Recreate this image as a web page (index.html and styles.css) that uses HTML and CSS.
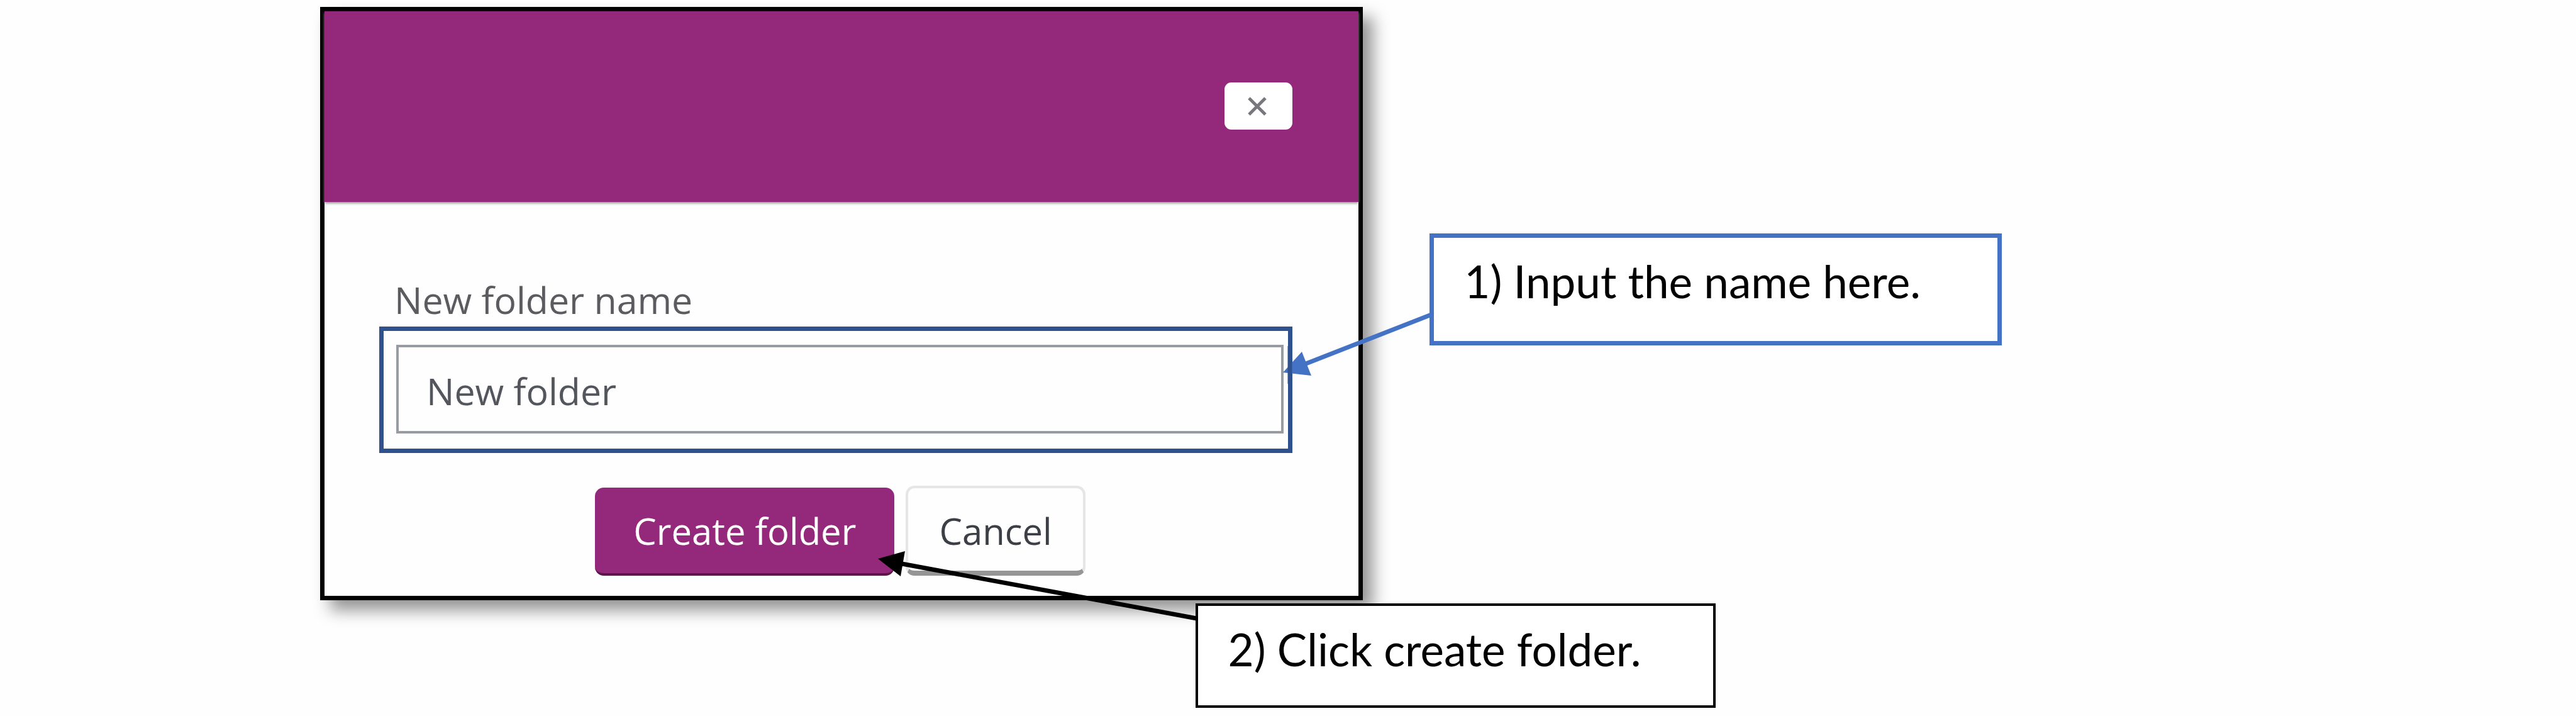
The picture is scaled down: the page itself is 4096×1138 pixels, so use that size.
FILE: index.html
```html
<!DOCTYPE html>
<html lang="en">
<head>
<meta charset="utf-8">
<title>New folder</title>
<link rel="stylesheet" href="styles.css">
</head>
<body>
<main class="guide">
  <form class="dialog">
    <header class="dialog-header">
      <button class="close" type="button" aria-label="Close">
        <svg class="close-icon" viewBox="0 0 30 30" aria-hidden="true"><path d="M2 2 L28 28 M28 2 L2 28"/></svg>
      </button>
    </header>
    <div class="dialog-body">
      <label class="field-label" for="folder-name">New folder name</label>
      <div class="highlight">
        <input class="field" id="folder-name" type="text" value="New folder">
      </div>
      <div class="actions">
        <button class="button button-primary" type="button">Create folder</button>
        <button class="button button-plain" type="button">Cancel</button>
      </div>
    </div>
  </form>
  <svg class="arrows" viewBox="0 0 4096 1138" aria-hidden="true">
    <path class="line-blue" d="M2276 500 L2074 579"/>
    <path class="head-blue" d="M2040 592 L2070 559 L2085 597 Z"/>
    <path class="frame-edge" d="M2051 550 V610"/>
    <path class="line-black" d="M1903 983 L1434 896"/>
    <path class="head-black" d="M1396 888 L1439 876 L1432 916 Z"/>
  </svg>
  <p class="callout callout-name">1) Input the name here.</p>
  <p class="callout callout-create">2) Click create folder.</p>
</main>
</body>
</html>
```
FILE: styles.css
```css
* {
  box-sizing: border-box;
}

body {
  margin: 0;
  background: #fefefe;
  font-family: "Open Sans", sans-serif;
}

.guide {
  position: relative;
  display: grid;
  grid-template-columns: 509fr 1658fr 1929fr;
  padding: 11px 0 184px;
}

.dialog {
  grid-column: 2;
  border: 7px solid #000;
  background: #fefefe;
  box-shadow: 16px 16px 24px rgba(0, 0, 0, 0.42);
}

.dialog-header {
  display: flex;
  justify-content: flex-end;
  padding: 113px 105px 115px;
  background: #94287a;
  box-shadow: 0 2px 4px #8a928c;
}

.close {
  display: flex;
  align-items: center;
  justify-content: center;
  width: 108px;
  height: 75px;
  padding: 0 4px 0 0;
  border: 0;
  border-radius: 11px;
  background: #fff;
}

.close-icon {
  width: 30px;
  height: 30px;
  fill: none;
  stroke: #77777d;
  stroke-width: 5;
}

.dialog-body {
  padding: 116px 105px 32px 87px;
}

.field-label {
  display: block;
  padding: 0 0 3px 24px;
  color: #5c5c60;
  font-size: 59px;
  line-height: 79px;
}

.highlight {
  padding: 22px 7px 24px 20px;
  border: 7px solid #2f528f;
}

.field {
  display: block;
  width: 100%;
  height: 141px;
  padding: 4px 44px 0;
  border: 4px solid #979ca3;
  background: #fefefe;
  color: #53565c;
  font: 59px "Open Sans", sans-serif;
}

.actions {
  display: flex;
  align-items: flex-end;
  justify-content: center;
  gap: 18px;
  padding: 52px 0 0 14px;
}

.button {
  border-radius: 14px;
  font: 58px "Open Sans", sans-serif;
}

.button-primary {
  height: 140px;
  padding: 0 61px;
  border: 0;
  border-bottom: 4px solid #5a1549;
  background: #94287a;
  color: #fff;
}

.button-plain {
  height: 143px;
  padding: 4px 49px 0;
  border: 4px solid #e6e6e6;
  border-bottom: 8px solid #959595;
  background: #fefefe;
  color: #3c3f45;
}

.arrows {
  position: absolute;
  top: 0;
  left: 0;
  width: 100%;
}

.line-blue,
.line-black {
  stroke-width: 7;
}

.line-blue {
  stroke: #4472c4;
}

.head-blue {
  fill: #4472c4;
}

.frame-edge {
  stroke: #2f528f;
  stroke-width: 7;
}

.line-black {
  stroke: #000;
}

.callout {
  position: absolute;
  margin: 0;
  background: #fff;
  color: #000;
  font-family: Lato, sans-serif;
  font-size: 71px;
  line-height: 82px;
}

.callout-name {
  top: 371px;
  left: 55.5%;
  width: 22.2%;
  padding: 28px 48px 54px;
  border: 7px solid #4472c4;
}

.callout-create {
  top: 959px;
  left: 46.4%;
  width: 20.2%;
  padding: 28px 48px 48px;
  border: 4px solid #000;
}
```
